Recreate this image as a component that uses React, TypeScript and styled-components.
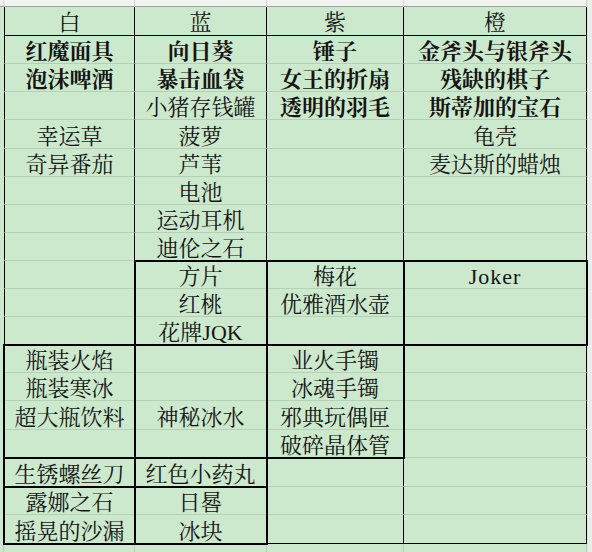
import React from "react";
import styled, { createGlobalStyle } from "styled-components";

const Global = createGlobalStyle`
  html, body { margin: 0; padding: 0; background: #ffffff; }
  #root { width: 592px; height: 552px; overflow: hidden; }
`;

const GREEN = "#cce8cd";
const GRID = "#b5d0b6";

const ROW_HEIGHTS = "7px 29px 28px 28px 28px 29px 28px 28px 28px 28px 28px 28px 28px 28px 28px 29px 28px 29px 28px 29px 1fr";

const Sheet = styled.div`
  display: grid;
  grid-template-columns: 4px 131px 132px 137px 183px 5px;
  grid-template-rows: ${ROW_HEIGHTS};
  width: 592px;
  height: 552px;
  background: ${GREEN};
  font-family: "Liberation Serif", "Noto Serif CJK SC", "Noto Sans CJK SC", serif;
  color: #151515;
`;

const TopStrip = styled.div<{ $c: number }>`
  grid-row: 1;
  grid-column: ${(p) => p.$c};
  background: #f1f3f1;
  border-right: 1px solid #d3d6d3;
  border-bottom: 1px solid #9ea69e;
`;

const SideStrip = styled.div`
  grid-row: 1 / -1;
  grid-column: 6;
  background: #e8efe8;
  border-left: 1px solid #dfe6df;
`;

const FootCell = styled.div<{ $c: number }>`
  grid-row: -2;
  grid-column: ${(p) => p.$c};
  border-right: 1px solid ${GRID};
`;

const Cell = styled.div<{
  $r: number;
  $c: number;
  $head?: boolean;
  $bold?: boolean;
  $last?: boolean;
  $latin?: boolean;
}>`
  grid-row: ${(p) => p.$r};
  grid-column: ${(p) => p.$c};
  box-sizing: border-box;
  display: flex;
  align-items: center;
  justify-content: center;
  padding-top: ${(p) => (p.$head ? "3px" : "5px")};
  border-right: 1px solid #000;
  border-left: ${(p) => (p.$c === 2 ? "1px solid #000" : "none")};
  border-bottom: 1px solid ${(p) => (p.$head || p.$last ? "#000" : GRID)};
  font-size: 22px;
  line-height: 1;
  letter-spacing: ${(p) => (p.$latin ? "1px" : "0")};
  font-weight: ${(p) => (p.$bold ? 700 : 400)};
  white-space: nowrap;
`;

const Box = styled.div<{ $c: number; $r1: number; $r2: number }>`
  grid-row: ${(p) => p.$r1} / ${(p) => p.$r2 + 1};
  grid-column: ${(p) => p.$c};
  margin: -1px;
  border: 2px solid #000;
  z-index: 2;
  pointer-events: none;
`;

const HEAD = ["白", "蓝", "紫", "橙"];

const DATA: string[][] = [
  ["红魔面具", "向日葵", "锤子", "金斧头与银斧头"],
  ["泡沫啤酒", "暴击血袋", "女王的折扇", "残缺的棋子"],
  ["", "小猪存钱罐", "透明的羽毛", "斯蒂加的宝石"],
  ["幸运草", "菠萝", "", "龟壳"],
  ["奇异番茄", "芦苇", "", "麦达斯的蜡烛"],
  ["", "电池", "", ""],
  ["", "运动耳机", "", ""],
  ["", "迪伦之石", "", ""],
  ["", "方片", "梅花", "Joker"],
  ["", "红桃", "优雅酒水壶", ""],
  ["", "花牌JQK", "", ""],
  ["瓶装火焰", "", "业火手镯", ""],
  ["瓶装寒冰", "", "冰魂手镯", ""],
  ["超大瓶饮料", "神秘冰水", "邪典玩偶匣", ""],
  ["", "", "破碎晶体管", ""],
  ["生锈螺丝刀", "红色小药丸", "", ""],
  ["露娜之石", "日晷", "", ""],
  ["摇晃的沙漏", "冰块", "", ""],
];

const BOLD = new Set([
  "红魔面具", "泡沫啤酒", "向日葵", "暴击血袋", "锤子", "女王的折扇",
  "透明的羽毛", "金斧头与银斧头", "残缺的棋子", "斯蒂加的宝石",
]);

// [data column (1-4), first data row, last data row]
const BOXES: [number, number, number][] = [
  [2, 9, 11],
  [3, 9, 11],
  [4, 9, 11],
  [1, 12, 15],
  [2, 12, 15],
  [3, 12, 15],
  [1, 16, 16],
  [2, 16, 16],
  [1, 17, 18],
  [2, 17, 18],
];

export default function App() {
  return (
    <>
      <Global />
      <Sheet>
        {[1, 2, 3, 4, 5].map((c) => (
          <TopStrip key={`t${c}`} $c={c} />
        ))}
        <SideStrip />
        {HEAD.map((h, i) => (
          <Cell key={`h${i}`} $r={2} $c={i + 2} $head>
            {h}
          </Cell>
        ))}
        {DATA.map((row, ri) =>
          row.map((t, ci) => (
            <Cell
              key={`${ri}-${ci}`}
              $r={ri + 3}
              $c={ci + 2}
              $bold={BOLD.has(t)}
              $latin={t === "Joker"}
              $last={ri === DATA.length - 1}
            >
              {t}
            </Cell>
          ))
        )}
        {[1, 2, 3, 4, 5].map((c) => (
          <FootCell key={`f${c}`} $c={c} />
        ))}
        {BOXES.map(([c, r1, r2], i) => (
          <Box key={`b${i}`} $c={c + 1} $r1={r1 + 2} $r2={r2 + 2} />
        ))}
      </Sheet>
    </>
  );
}
